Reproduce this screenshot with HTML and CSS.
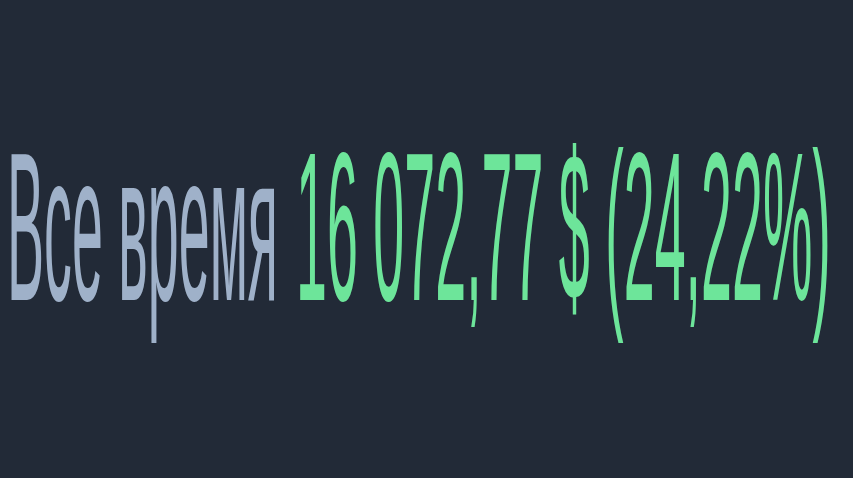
FILE: index.html
```html
<!DOCTYPE html>
<html lang="ru">
<head>
<meta charset="utf-8">
<link rel="stylesheet" href="styles.css">
</head>
<body>
<div class="page">
  <div class="stat">
    <span class="label">Все время</span>
    <span class="value">16 072,77 $ (24,22%)</span>
  </div>
</div>
</body>
</html>
```
FILE: styles.css
```css
html, body {
  margin: 0;
  padding: 0;
  background: #222a37;
}
.page {
  width: 853px;
  height: 478px;
  overflow: hidden;
  padding: 120px 0 0 7px;
  box-sizing: border-box;
}
.stat {
  display: flex;
  gap: 6.5px;
  white-space: nowrap;
  font-family: "Liberation Sans", Arial, sans-serif;
  font-size: 20px;
  line-height: 20px;
  transform: scale(2.78, 10.6);
  transform-origin: 0 0;
}
.label {
  color: #9fb1c9;
}
.value {
  color: #6de59a;
}
```
